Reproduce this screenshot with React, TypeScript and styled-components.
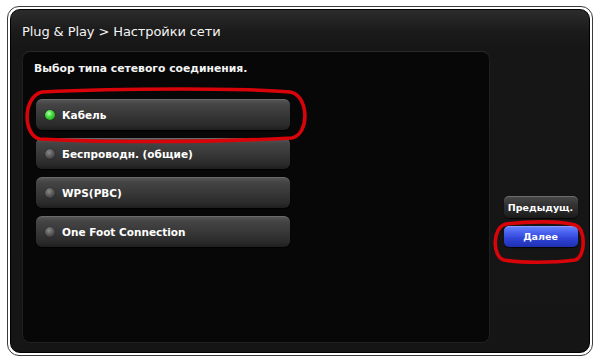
import React from "react";
import styled, { createGlobalStyle } from "styled-components";

const Global = createGlobalStyle`
  html, body { margin: 0; padding: 0; background: #ffffff; }
  body { font-family: "DejaVu Sans", "Liberation Sans", sans-serif; }
`;

const Page = styled.div`
  position: relative;
  width: 600px;
  height: 361px;
  padding: 6px 0 0 7px;
  box-sizing: border-box;
`;

const Frame = styled.div`
  width: 586px;
  height: 350px;
  box-sizing: border-box;
  border: 1px solid #3a3a3a;
  border-radius: 12px;
  padding: 2px;
  background: #ffffff;
`;

const Screen = styled.div`
  height: 100%;
  box-sizing: border-box;
  border: 1px solid #000;
  border-radius: 10px;
  background: linear-gradient(#2c2c2c 0px, #1a1a1a 22px, #161616 40px, #151515 100%);
  display: grid;
  grid-template-columns: 468px 1fr;
  grid-template-rows: 41px 1fr;
  padding: 0 0 9px 11px;
`;

const Title = styled.div`
  grid-column: 1 / 3;
  display: flex;
  align-items: center;
  padding-top: 2px;
  color: #f4f4f4;
  font-size: 13px;
  letter-spacing: -0.1px;
`;

const Panel = styled.div`
  background: #070707;
  border: 1px solid #202020;
  border-top-color: #2a2a2a;
  border-radius: 8px;
  padding: 9px 0 0 11px;
  display: flex;
  flex-direction: column;
`;

const Heading = styled.div`
  color: #f4f4f4;
  font-weight: bold;
  font-size: 10.8px;
  height: 16px;
  line-height: 16px;
  margin-bottom: 22px;
`;

const Options = styled.div`
  display: flex;
  flex-direction: column;
  gap: 8px;
  margin-left: 2px;
`;

const Option = styled.div`
  width: 254px;
  height: 31px;
  box-sizing: border-box;
  border-radius: 6px;
  background: linear-gradient(#585858 0%, #444 18%, #383838 50%, #2a2a2a 85%, #1e1e1e 100%);
  box-shadow: inset 0 1px 0 rgba(255,255,255,0.12), 0 1px 1px rgba(0,0,0,0.8);
  display: flex;
  align-items: center;
  padding-left: 9px;
  gap: 7px;
  color: #ffffff;
  font-weight: bold;
  font-size: 10.5px;
`;

const Led = styled.span<{ $on?: boolean }>`
  width: 10px;
  height: 10px;
  border-radius: 50%;
  background: ${(p) =>
    p.$on
      ? "radial-gradient(circle at 40% 35%, #b8ffb0 0%, #3fdc3a 40%, #178a14 100%)"
      : "radial-gradient(circle at 40% 35%, #8a8a8a 0%, #5a5a5a 45%, #2c2c2c 100%)"};
  box-shadow: 0 0 1px rgba(0,0,0,0.9);
`;

const Side = styled.div`
  display: flex;
  flex-direction: column;
  align-items: center;
  padding-top: 145px;
  padding-left: 2px;
  gap: 8px;
`;

const NavButton = styled.div<{ $primary?: boolean }>`
  width: 74px;
  height: ${(p) => (p.$primary ? "21px" : "22px")};
  box-sizing: border-box;
  border-radius: 5px;
  display: flex;
  align-items: center;
  justify-content: center;
  color: #ffffff;
  font-weight: bold;
  font-size: 9.5px;
  background: ${(p) =>
    p.$primary
      ? "linear-gradient(#6c86ff 0%, #4a62f0 30%, #2f44d6 60%, #1f2fb0 100%)"
      : "linear-gradient(#4a4a4a 0%, #333 40%, #232323 80%, #1a1a1a 100%)"};
  box-shadow: inset 0 1px 0 rgba(255,255,255,0.2), 0 1px 1px rgba(0,0,0,0.8);
`;

const Marks = styled.svg`
  position: absolute;
  left: 0;
  top: 0;
  pointer-events: none;
`;

export default function App() {
  const options = ["Кабель", "Беспроводн. (общие)", "WPS(PBC)", "One Foot Connection"];
  return (
    <Page>
      <Global />
      <Frame>
        <Screen>
          <Title>Plug &amp; Play &gt; Настройки сети</Title>
          <Panel>
            <Heading>Выбор типа сетевого соединения.</Heading>
            <Options>
              {options.map((o, i) => (
                <Option key={o}>
                  <Led $on={i === 0} />
                  {o}
                </Option>
              ))}
            </Options>
          </Panel>
          <Side>
            <NavButton>Предыдущ.</NavButton>
            <NavButton $primary>Далее</NavButton>
          </Side>
        </Screen>
      </Frame>
      <Marks width="600" height="361" viewBox="0 0 600 361">
        <path
          d="M 42 92 C 120 88, 250 88, 290 92 C 309 95, 310 134, 292 138 C 200 143, 90 142, 40 139 C 23 136, 22 97, 42 92 Z"
          fill="none"
          stroke="#d8040a"
          strokeWidth="3.6"
          strokeLinecap="round"
        />
        <path
          d="M 506 224 C 530 221, 562 221, 575 225 C 586 228, 586 257, 575 260 C 552 263, 522 263, 504 260 C 492 257, 492 227, 506 224 Z"
          fill="none"
          stroke="#d8040a"
          strokeWidth="3.6"
          strokeLinecap="round"
        />
      </Marks>
    </Page>
  );
}
